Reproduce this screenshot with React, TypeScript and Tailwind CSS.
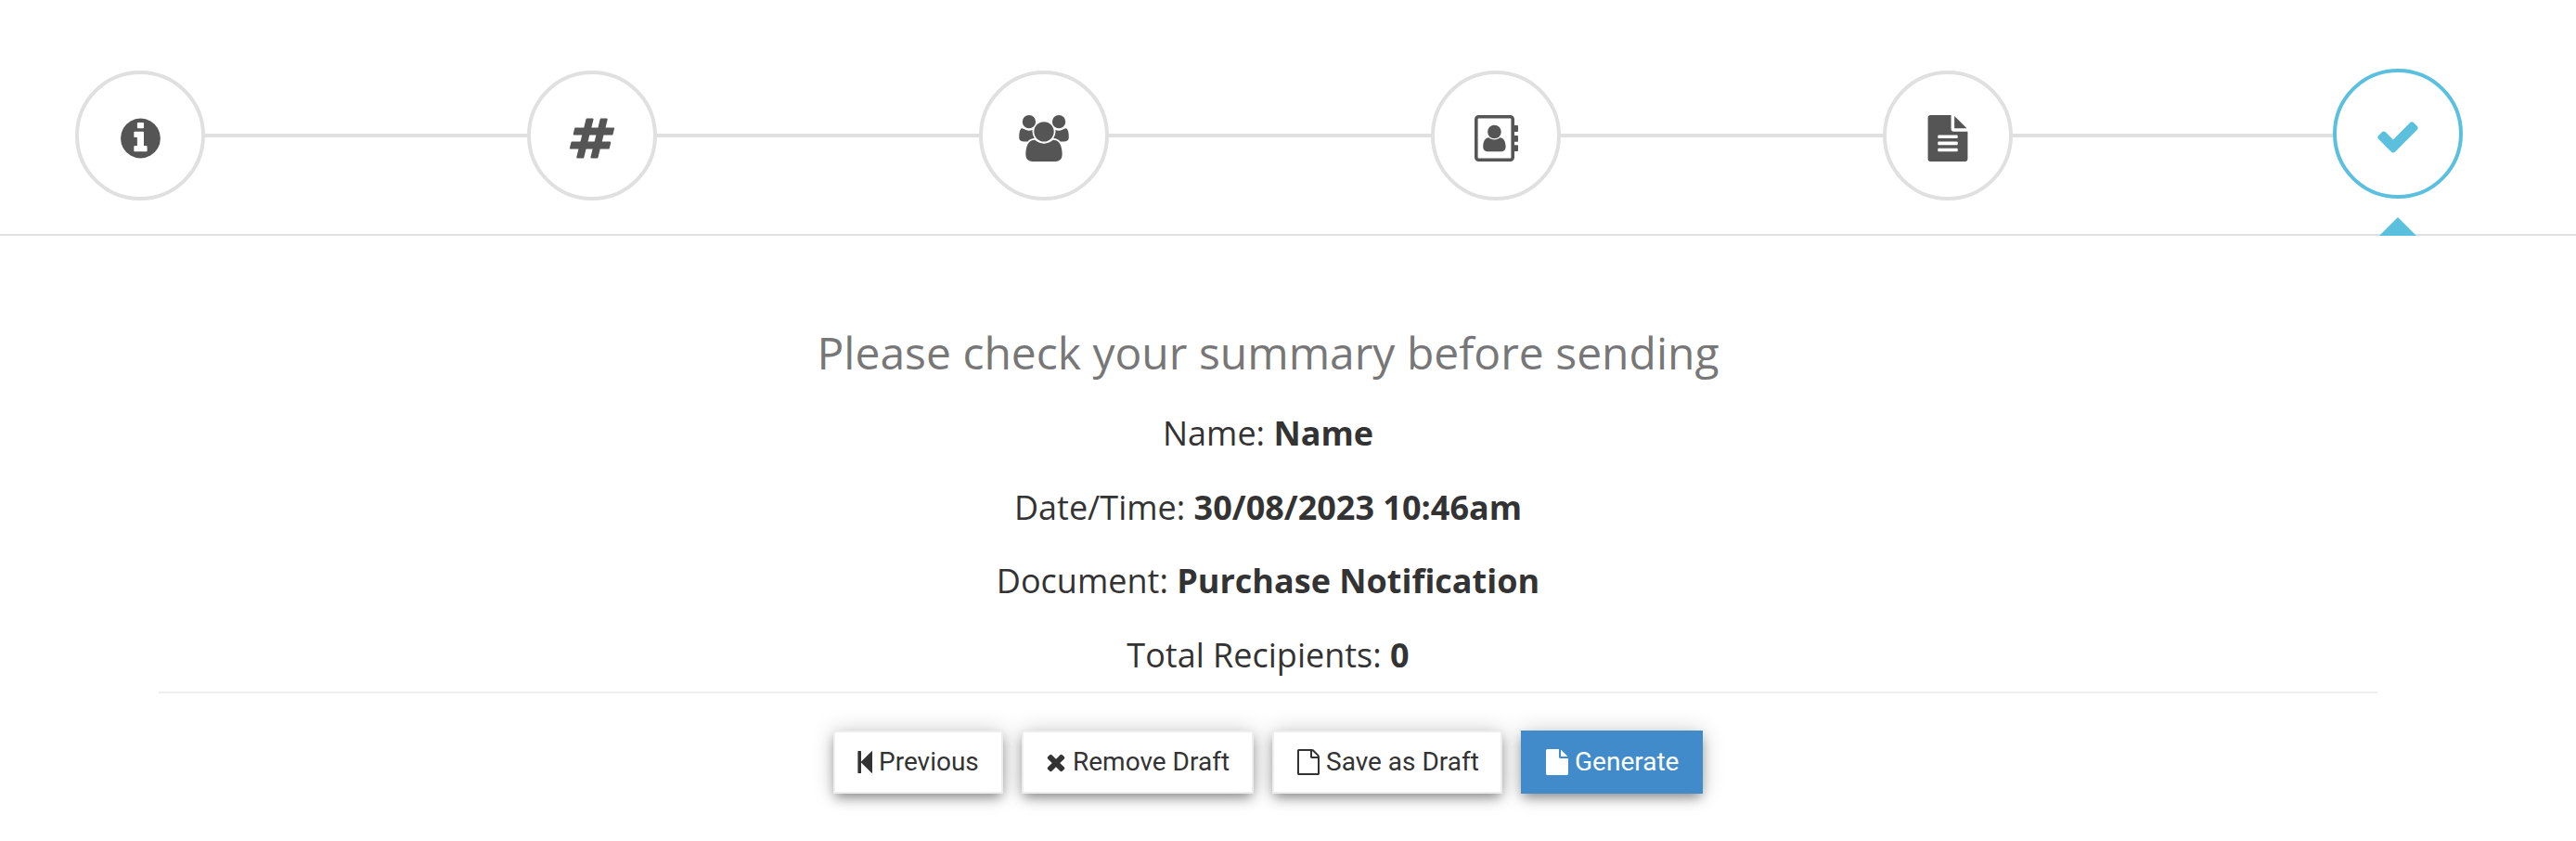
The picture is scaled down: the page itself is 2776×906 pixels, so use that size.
import type { ReactNode } from 'react';
import clsx from 'clsx';

interface IconProps {
  viewBox: string;
  className: string;
  children: ReactNode;
}

function Icon({ viewBox, className, children }: IconProps) {
  return (
    <svg viewBox={viewBox} className={clsx('block shrink-0 fill-current', className)} aria-hidden="true">
      {children}
    </svg>
  );
}

const steps = [
  {
    id: 'info',
    icon: (
      <Icon viewBox="-16 0 1792 1792" className="w-[50px] h-[50px]">
        <path d="M1152 1376v-160q0-14-9-23t-23-9h-96v-512q0-14-9-23t-23-9h-320q-14 0-23 9t-9 23v160q0 14 9 23t23 9h96v320h-96q-14 0-23 9t-9 23v160q0 14 9 23t23 9h448q14 0 23-9t9-23zm-128-896v-160q0-14-9-23t-23-9h-192q-14 0-23 9t-9 23v160q0 14 9 23t23 9h192q14 0 23-9t9-23zm640 416q0 209-103 385.500t-279.500 279.500-385.500 103-385.500-103-279.500-279.500-103-385.500 103-385.500 279.500-279.500 385.500-103 385.500 103 279.500 279.500 103 385.500z" />
      </Icon>
    ),
  },
  {
    id: 'reference',
    icon: (
      <Icon viewBox="0 0 1792 1792" className="w-[50px] h-[50px]">
        <path d="M991 1024l64-256h-254l-64 256h254zm768-504l-56 224q-7 24-31 24h-327l-64 256h311q15 0 25 12 10 14 6 28l-56 224q-5 24-31 24h-327l-81 328q-7 24-31 24h-224q-16 0-26-12-9-12-6-28l78-312h-254l-81 328q-7 24-31 24h-225q-15 0-25-12-9-12-6-28l78-312h-311q-15 0-25-12-9-12-6-28l56-224q7-24 31-24h327l64-256h-311q-15 0-25-12-10-14-6-28l56-224q5-24 31-24h327l81-328q7-24 32-24h224q15 0 25 12 9 12 6 28l-78 312h254l81-328q7-24 32-24h224q15 0 25 12 9 12 6 28l-78 312h311q15 0 25 12 9 12 6 28z" />
      </Icon>
    ),
  },
  {
    id: 'recipients',
    icon: (
      <Icon viewBox="0 0 1920 1792" className="w-[54px] h-[50px]">
        <path d="M593 896q-162 5-265 128h-134q-82 0-138-40.500t-56-118.500q0-353 124-353 6 0 43.500 21t97.500 42.500 119 21.500q67 0 133-23-5 37-5 66 0 139 81 256zm1071 637q0 120-73 189.500t-194 69.500h-874q-121 0-194-69.500t-73-189.500q0-53 3.500-103.500t14-109 26.500-108.500 43-97.500 62-81 85.500-53.500 111.500-20q10 0 43 21.500t73 48 107 48 135 21.500 135-21.500 107-48 73-48 43-21.500q61 0 111.500 20t85.500 53.500 62 81 43 97.500 26.500 108.500 14 109 3.500 103.500zm-1024-1277q0 106-75 181t-181 75-181-75-75-181 75-181 181-75 181 75 75 181zm704 384q0 159-112.500 271.500t-271.500 112.500-271.500-112.500-112.500-271.500 112.500-271.500 271.500-112.500 271.500 112.500 112.500 271.500zm576 225q0 78-56 118.500t-138 40.500h-134q-103-123-265-128 81-117 81-256 0-29-5-66 66 23 133 23 59 0 119-21.500t97.500-42.500 43.500-21q124 0 124 353zm-128-609q0 106-75 181t-181 75-181-75-75-181 75-181 181-75 181 75 75 181z" />
      </Icon>
    ),
  },
  {
    id: 'contacts',
    icon: (
      <Icon viewBox="0 0 47 50" className="w-[47px] h-[50px]">
        <path
          fillRule="evenodd"
          d="M4.500 0H38.500A4.500 4.500 0 0 1 43 4.500V11H46.100Q47 11 47 11.900V17.100Q47 18 46.100 18H43V22H46.100Q47 22 47 22.900V27.900Q47 28.800 46.100 28.800H43V32.200H46.100Q47 32.200 47 33.100V38.100Q47 39 46.100 39H43V45.500A4.500 4.500 0 0 1 38.500 50H4.500A4.500 4.500 0 0 1 0 45.500V4.500A4.500 4.500 0 0 1 4.500 0ZM4.500 3.600A.9.900 0 0 0 3.600 4.500V45.500A.9.900 0 0 0 4.500 46.400H38.500A.9.900 0 0 0 39.400 45.500V4.500A.9.900 0 0 0 38.500 3.600Z"
        />
        <circle cx="21.400" cy="18" r="7.300" />
        <path d="M15.500 24.200C10.800 24.200 9.200 29.500 9.200 34.300C9.200 37.200 11 39.200 13.600 39.200H29.200C31.800 39.200 33.600 37.200 33.600 34.300C33.600 29.500 32 24.200 27.300 24.200C25.700 25.600 23.700 26.400 21.400 26.400C19.100 26.400 17.100 25.600 15.500 24.200Z" />
      </Icon>
    ),
  },
  {
    id: 'document',
    icon: (
      <Icon viewBox="0 0 1792 1792" className="w-[50px] h-[50px]">
        <path d="M1596 476q14 14 28 36h-472v-472q22 14 36 28zm-476 164h544v1056q0 40-28 68t-68 28h-1344q-40 0-68-28t-28-68v-1600q0-40 28-68t68-28h800v544q0 40 28 68t68 28zm160 736v-64q0-14-9-23t-23-9h-704q-14 0-23 9t-9 23v64q0 14 9 23t23 9h704q14 0 23-9t9-23zm0-256v-64q0-14-9-23t-23-9h-704q-14 0-23 9t-9 23v64q0 14 9 23t23 9h704q14 0 23-9t9-23zm0-256v-64q0-14-9-23t-23-9h-704q-14 0-23 9t-9 23v64q0 14 9 23t23 9h704q14 0 23-9t9-23z" />
      </Icon>
    ),
  },
  {
    id: 'complete',
    active: true,
    icon: (
      <Icon viewBox="0 0 1792 1792" className="w-[50px] h-[50px]">
        <path d="M1671 566q0 40-28 68l-724 724-136 136q-28 28-68 28t-68-28l-136-136-362-362q-28-28-28-68t28-68l136-136q28-28 68-28t68 28l294 295 656-657q28-28 68-28t68 28l136 136q28 28 28 68z" />
      </Icon>
    ),
  },
];

const summary = [
  { label: 'Name', value: 'Name' },
  { label: 'Date/Time', value: '30/08/2023 10:46am' },
  { label: 'Document', value: 'Purchase Notification' },
  { label: 'Total Recipients', value: '0' },
];

const buttons = [
  {
    label: 'Previous',
    size: 'w-[183px] pl-6',
    icon: (
      <Icon viewBox="0 0 16 28" className="w-4 h-7">
        <path d="M.9 2H3.500Q4 2 4 2.500V13.500L15.400 2.200Q16 1.700 16 2.500V25.500Q16 26.300 15.400 25.800L4 14.500V25.500Q4 26 3.500 26H.9Q.4 26 .4 25.500V2.500Q.4 2 .9 2Z" />
      </Icon>
    ),
  },
  {
    label: 'Remove Draft',
    size: 'w-[250px] pl-6',
    icon: (
      <Icon viewBox="192 0 1408 1792" className="w-[22px] h-7">
        <path d="M1490 1322q0 40-28 68l-136 136q-28 28-68 28t-68-28l-294-294-294 294q-28 28-68 28t-68-28l-136-136q-28-28-28-68t28-68l294-294-294-294q-28-28-28-68t28-68l136-136q28-28 68-28t68 28l294 294 294-294q28-28 68-28t68 28l136 136q28 28 28 68t-28 68l-294 294 294 294q28 28 28 68z" />
      </Icon>
    ),
  },
  {
    label: 'Save as Draft',
    size: 'w-[248px] pl-[25px]',
    icon: (
      <Icon viewBox="128 0 1536 1792" className="w-6 h-7">
        <path d="M1596 380q28 28 48 76t20 88v1152q0 40-28 68t-68 28h-1344q-40 0-68-28t-28-68v-1600q0-40 28-68t68-28h896q40 0 88 20t76 48zm-444-244v376h376q-10-29-22-41l-313-313q-12-12-41-22zm384 1528v-1024h-416q-40 0-68-28t-28-68v-416h-768v1536h1280z" />
      </Icon>
    ),
  },
  {
    label: 'Generate',
    primary: true,
    size: 'w-[196px] pl-[25px]',
    icon: (
      <Icon viewBox="128 0 1536 1792" className="w-6 h-7">
        <path d="M1152 512v-472q22 14 36 28l408 408q14 14 28 36h-472zm-128 32q0 40 28 68t68 28h544v1056q0 40-28 68t-68 28h-1344q-40 0-68-28t-28-68v-1600q0-40 28-68t68-28h800v544z" />
      </Icon>
    ),
  },
];

export default function App() {
  return (
    <div className="w-[2776px] h-[906px] overflow-hidden bg-white text-[#333]">
      {/* Wizard steps */}
      <div className="h-[254px] pt-[76px] pl-[81px] border-b-2 border-[#e0e0e0]">
        <div className="flex items-center h-[140px]">
          {steps.map((step, index) => (
            <div key={step.id} className="flex items-center shrink-0">
              {index > 0 && <div className="w-[347px] h-1 bg-[#e0e0e0]" />}
              <div
                className={clsx(
                  'relative flex items-center justify-center w-[140px] h-[140px] rounded-full border-4 bg-white',
                  step.active
                    ? '-ml-0.5 -mt-1 pt-[5px] border-[#5bc0de] text-[#5bc0de]'
                    : 'pt-1.5 border-[#e0e0e0] text-[#555]'
                )}
              >
                {step.icon}
                {step.active && (
                  <Icon viewBox="0 0 40 20" className="absolute left-[46px] top-[156px] w-10 h-5">
                    <path d="M20 0L40 20H0Z" />
                  </Icon>
                )}
              </div>
            </div>
          ))}
        </div>
      </div>

      {/* Summary */}
      <div className="w-[2391px] ml-[171px] pt-[93px] text-center font-['Open_Sans',sans-serif]">
        <h3 className="text-[48px] leading-[66px] text-[#777]">
          Please check your summary before sending
        </h3>
        <div className="mt-[19px] h-[315px] border-b-2 border-[#eee]">
          {summary.map((row) => (
            <p key={row.label} className="h-[79.700px] text-[36px] leading-[70px]">
              {row.label}: <b className="font-bold">{row.value}</b>
            </p>
          ))}
        </div>
      </div>

      {/* Actions */}
      <div className="flex gap-5 ml-[898px] mt-10 font-['Roboto',sans-serif]">
        {buttons.map((button) => (
          <button
            key={button.label}
            className={clsx(
              'flex items-center gap-[7px] h-[68px] border-2 text-[28px] leading-10 whitespace-nowrap shadow-[0_6px_12px_-2px_rgba(0,0,0,0.4),0_0_24px_rgba(0,0,0,0.18)]',
              button.size,
              button.primary
                ? 'bg-[#428bca] border-[#428bca] text-white'
                : 'bg-white border-[#eee] text-[#333]'
            )}
          >
            {button.icon}
            <span>{button.label}</span>
          </button>
        ))}
      </div>
    </div>
  );
}
